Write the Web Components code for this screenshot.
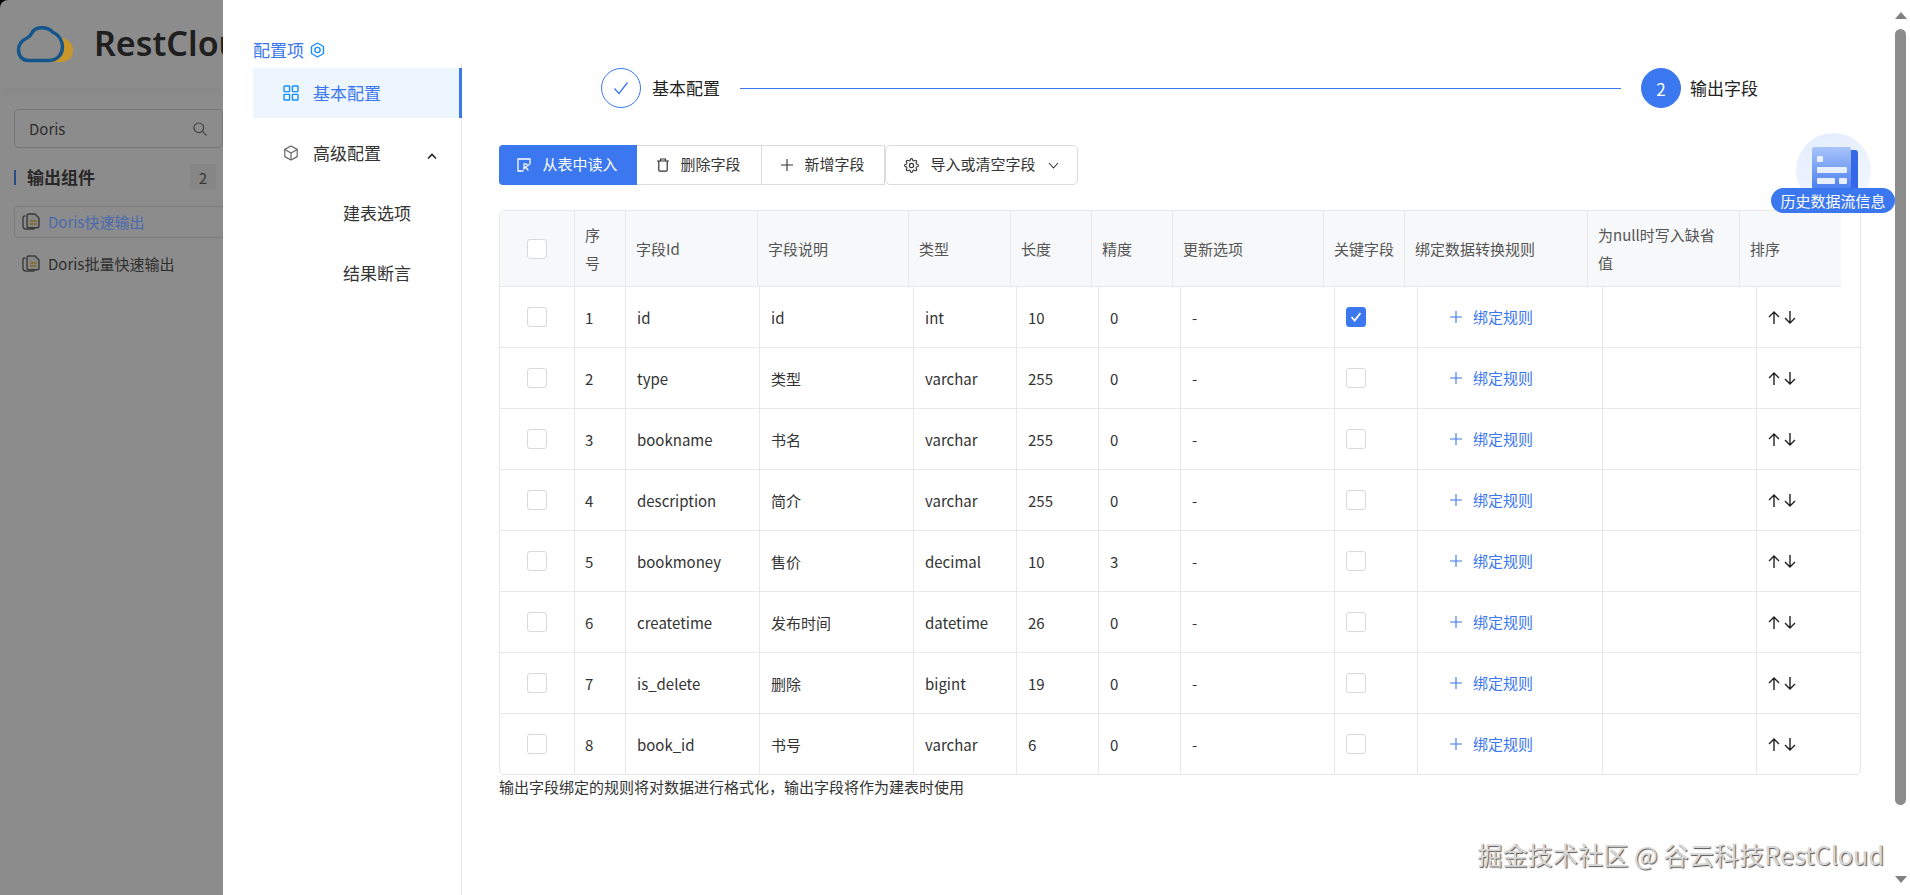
<!DOCTYPE html>
<html lang="zh">
<head>
<meta charset="utf-8">
<title>RestCloud</title>
<style>
  html, body { margin: 0; height: 100%; overflow: hidden; background: #fff; }
  body { font-family: "Noto Sans CJK SC", "Noto Sans", sans-serif; color: #333; }
  rest-page { height: 895px; }
</style>
</head>
<body>
<rest-page></rest-page>

<script>
const BLUE = '#3b77ee';

const icons = {
  grid: `<svg width="16" height="16" viewBox="0 0 16 16" fill="none" stroke="#1890ff" stroke-width="1.4"><rect x="1" y="1" width="5.6" height="5.6" rx=".6"/><rect x="9.4" y="1" width="5.6" height="5.6" rx=".6"/><rect x="1" y="9.4" width="5.6" height="5.6" rx=".6"/><rect x="9.4" y="9.4" width="5.6" height="5.6" rx=".6"/></svg>`,
  cube: `<svg width="16" height="16" viewBox="0 0 16 16" fill="none" stroke="#666" stroke-width="1.2" stroke-linejoin="round"><path d="M8 1l6.2 3.4v7.2L8 15l-6.2-3.4V4.4z"/><path d="M1.8 4.4L8 8l6.2-3.6M8 8v7"/></svg>`,
  hex: `<svg width="15" height="16" viewBox="0 0 15 16" fill="none" stroke="#1890ff" stroke-width="1.4" stroke-linejoin="round"><path d="M7.5 1l6 3.5v7l-6 3.5-6-3.5v-7z"/><circle cx="7.5" cy="8" r="2.6"/></svg>`,
  chevronUp: `<svg width="10" height="7" viewBox="0 0 10 7" fill="none" stroke="#222" stroke-width="1.6"><path d="M1 5.5l4-4 4 4"/></svg>`,
  chevronDown: `<svg width="11" height="7" viewBox="0 0 11 7" fill="none" stroke="#333" stroke-width="1.1"><path d="M1 1l4.5 5L10 1"/></svg>`,
  check: `<svg width="16" height="14" viewBox="0 0 16 14" fill="none" stroke="${BLUE}" stroke-width="1.3"><path d="M1.5 7.5l4.5 5 8.5-11"/></svg>`,
  importIn: `<svg width="14" height="14" viewBox="0 0 14 14" fill="none" stroke="#fff" stroke-width="1.3"><path d="M13 6.5V1H1v12h5.5"/><path d="M7 5.5v5.2l1.6-1.5 2.8 3.3M7 5.5l4.6 1.4-3 2.3"/></svg>`,
  trash: `<svg width="12" height="14" viewBox="0 0 12 14" fill="none" stroke="#333" stroke-width="1.2"><path d="M0 3h12M3.500 3V1h5v2M1.800 3v9a1.200 1.200 0 0 0 1.200 1.200h6a1.200 1.200 0 0 0 1.200-1.200V3"/></svg>`,
  plus: c => `<svg width="12" height="12" viewBox="0 0 12 12" fill="none" stroke="${c}" stroke-width="1.1"><path d="M6 0v12M0 6h12"/></svg>`,
  gear: `<svg width="15" height="15" viewBox="0 0 24 24" fill="none" stroke="#333" stroke-width="1.8"><circle cx="12" cy="12" r="3.4"/><path d="M19.4 15a1.65 1.65 0 0 0 .33 1.82l.06.06a2 2 0 0 1 0 2.83 2 2 0 0 1-2.83 0l-.06-.06a1.65 1.65 0 0 0-1.82-.33 1.65 1.65 0 0 0-1 1.51V21a2 2 0 0 1-2 2 2 2 0 0 1-2-2v-.09A1.65 1.65 0 0 0 9 19.4a1.65 1.65 0 0 0-1.82.33l-.06.06a2 2 0 0 1-2.83 0 2 2 0 0 1 0-2.83l.06-.06a1.65 1.65 0 0 0 .33-1.82 1.65 1.65 0 0 0-1.51-1H3a2 2 0 0 1-2-2 2 2 0 0 1 2-2h.09A1.65 1.65 0 0 0 4.6 9a1.65 1.65 0 0 0-.33-1.82l-.06-.06a2 2 0 0 1 0-2.83 2 2 0 0 1 2.83 0l.06.06a1.65 1.65 0 0 0 1.82.33H9a1.65 1.65 0 0 0 1-1.51V3a2 2 0 0 1 2-2 2 2 0 0 1 2 2v.09a1.65 1.65 0 0 0 1 1.51 1.65 1.65 0 0 0 1.82-.33l.06-.06a2 2 0 0 1 2.83 0 2 2 0 0 1 0 2.83l-.06.06a1.65 1.65 0 0 0-.33 1.82V9a1.65 1.65 0 0 0 1.51 1H21a2 2 0 0 1 2 2 2 2 0 0 1-2 2h-.09a1.65 1.65 0 0 0-1.51 1z"/></svg>`,
  arrows: `<svg width="28" height="13" viewBox="0 0 28 13" fill="none" stroke="#222" stroke-width="1.4"><path d="M6 13V1M1 6l5-5 5 5M22 0v12M17 7l5 5 5-5"/></svg>`,
  search: `<svg width="14" height="14" viewBox="0 0 14 14" fill="none" stroke="#777" stroke-width="1.2"><circle cx="5.8" cy="5.8" r="4.8"/><path d="M9.3 9.3l4.2 4.2"/></svg>`,
  doc: `<svg width="18" height="17" viewBox="0 0 18 17" fill="none" stroke="#6b6b6b" stroke-width="1.4" stroke-linejoin="round"><path d="M3.500 3H2.500A1.500 1.500 0 0 0 1 4.500v9A2.500 2.500 0 0 0 3.500 16h8A2 2 0 0 0 13 14.500"/><path d="M5 2.500A1.500 1.500 0 0 1 6.500 1H13l4 4v8a1.800 1.800 0 0 1-1.800 1.800H6.500A1.500 1.500 0 0 1 5 13.300z" fill="#f4f4f4"/><path d="M8 8h6.500M8 11h6.500" stroke="#f0c040" stroke-width="1.600"/></svg>`,
  logo: `<svg width="60" height="42" viewBox="0 0 60 42" fill="none"><path d="M48 15c7.500 1.500 11 7 11 12.500C59 35 53 39 46 39H33c8-1.500 13-8 14.500-15 .4-2.500.7-6 .5-9z" fill="#c9962a"/><path d="M14 37.500h21c9 0 13.500-7 13.500-13.500 0-7-4.500-13-10-15C34 3.500 21 2.500 17.500 10.500c-1 2.500-2.500 3.500-4.500 4.500C7.500 17.500 4.500 22 4.500 27c0 6 4 10.500 9.500 10.500z" stroke="#14558c" stroke-width="3.400"/></svg>`,
  sheet: `<svg width="46" height="42" viewBox="0 0 46 42" fill="none"><defs><linearGradient id="sheetFill" x1="0" y1="0" x2="0" y2="1"><stop offset="0" stop-color="#a8c4fa"/><stop offset="1" stop-color="#4c80f0"/></linearGradient></defs><path d="M38 3h5a3 3 0 0 1 3 3v36h-8z" fill="#3568e8"/><rect width="39" height="42" rx="2" fill="url(#sheetFill)"/><rect x="5" y="9" width="6" height="6" rx="1" fill="#e8f0ff"/><rect x="5" y="20" width="30" height="6" rx="1" fill="#e8f0ff"/><rect x="5" y="31" width="18" height="6" rx="1" fill="#e8f0ff"/><rect x="27" y="31" width="8" height="6" rx="1" fill="#e8f0ff"/></svg>`
};

class RestPage extends HTMLElement {
  connectedCallback() {
    this.attachShadow({ mode: 'open' });
    this.shadowRoot.innerHTML = `
      <style>
        :host { display: flex; width: 100%; overflow: hidden; }
        rest-backdrop { flex: 0 0 223px; }
        config-drawer { flex: 1; min-width: 0; }
      </style>
      <rest-backdrop></rest-backdrop>
      <config-drawer></config-drawer>
    `;
  }
}

// the dimmed component panel behind the drawer
class RestBackdrop extends HTMLElement {
  connectedCallback() {
    this.attachShadow({ mode: 'open' });
    this.shadowRoot.innerHTML = `
      <style>
        :host { display: block; position: relative; overflow: hidden; background: #000; height: 100%; }
        .panel { height: 100%; background: #fff; border-top-left-radius: 8px; }
        .mask { position: absolute; inset: 0; background: rgba(0, 0, 0, .45); }
        .head { height: 88px; box-sizing: border-box; padding: 23px 0 0 14px; display: flex; align-items: flex-start; white-space: nowrap; box-shadow: 0 2px 10px rgba(0, 0, 0, .05); }
        .head svg { flex: none; position: relative; z-index: 2; }
        .brand { margin: -5px 0 0 20px; font: 600 34px/50px "Noto Sans", sans-serif; color: #3a3a3a; }
        .search { margin: 21px 0 0 14px; width: 209px; height: 39px; box-sizing: border-box; border: 1px solid #d5d5d5; border-radius: 5px; padding: 0 15px 0 14px; display: flex; align-items: center; justify-content: space-between; font-size: 15px; color: #555; }
        .cat { margin: 16px 7px 0 14px; height: 26px; display: flex; align-items: center; font-size: 17px; font-weight: 700; color: #4a4a4a; }
        .cat b { font-weight: 700; padding-bottom: 2px; }
        .cat i { width: 2px; height: 15px; background: #4a8af0; margin-right: 11px; }
        .cat span { margin-left: auto; width: 26px; height: 26px; background: #f5f5f5; color: #666; display: grid; place-items: center; font-size: 15px; font-weight: 400; }
        .item { margin-left: 14px; height: 32px; box-sizing: border-box; width: 240px; padding: 0 0 2px 7px; display: flex; align-items: center; gap: 8px; font-size: 15px; white-space: nowrap; border: 1px solid transparent; border-radius: 4px; color: #555; }
        .item svg { flex: none; }
        .item.on { margin-top: 16px; border-color: #e2e2e2; margin-bottom: 10px; }
        .item.on span { position: relative; z-index: 2; color: #4a6aae; }
      </style>
      <div class="panel">
        <div class="head">${icons.logo}<div class="brand">RestCloud</div></div>
        <div class="search"><span>Doris</span>${icons.search}</div>
        <div class="cat"><i></i><b>输出组件</b><span>2</span></div>
        <div class="item on">${icons.doc}<span>Doris快速输出</span></div>
        <div class="item">${icons.doc}Doris批量快速输出</div>
      </div>
      <div class="mask"></div>
    `;
  }
}

class ConfigDrawer extends HTMLElement {
  connectedCallback() {
    this.attachShadow({ mode: 'open' });
    this.shadowRoot.innerHTML = `
      <style>
        :host { display: flex; position: relative; height: 100%; background: #fff; overflow: hidden; }
        config-menu { flex: 0 0 239px; }
        main { flex: 1; min-width: 0; box-sizing: border-box; padding: 68px 32px 0 37px; }
        step-bar { margin: 0 103px 37px 102px; }
        tool-bar { margin-bottom: 25px; }
        .note { margin-top: 1px; font-size: 15px; line-height: 21px; color: #333; }
        scroll-rail { flex: 0 0 17px; }
        history-badge { position: absolute; left: 1548px; top: 133px; }
        .mark { position: absolute; right: 26px; top: 836px; font-size: 25.2px; line-height: 36px; color: #d8d8d8; text-shadow: 1px 1px 1px #555; white-space: nowrap; }
      </style>
      <config-menu></config-menu>
      <main>
        <step-bar></step-bar>
        <tool-bar></tool-bar>
        <field-table></field-table>
        <div class="note">输出字段绑定的规则将对数据进行格式化，输出字段将作为建表时使用</div>
      </main>
      <scroll-rail></scroll-rail>
      <history-badge></history-badge>
      <div class="mark">掘金技术社区 @ 谷云科技RestCloud</div>
    `;
  }
}

class ConfigMenu extends HTMLElement {
  connectedCallback() {
    this.attachShadow({ mode: 'open' });
    this.shadowRoot.innerHTML = `
      <style>
        :host { display: flex; flex-direction: column; height: 100%; box-sizing: border-box; padding-left: 30px; }
        .title { height: 63px; box-sizing: border-box; padding-top: 37px; display: flex; align-items: center; gap: 6px; font-size: 17px; line-height: 24px; color: ${BLUE}; }
        ul { flex: 1; list-style: none; margin: 0; padding: 5px 0 0; border-right: 1px solid #e8e8e8; }
        li { position: relative; height: 50px; box-sizing: border-box; margin-bottom: 10px; padding: 0 0 2px 30px; display: flex; align-items: center; font-size: 17px; color: #333; }
        li > svg { margin: 2px 14px 0 0; }
        li.on { background: #edf5ff; color: ${BLUE}; margin-right: -1px; border-right: 3px solid ${BLUE}; }
        li.sub { padding-left: 90px; }
        li .fold { margin-left: auto; margin-right: 24px; }
      </style>
      <div class="title">配置项${icons.hex}</div>
      <ul>
        <li class="on">${icons.grid}基本配置</li>
        <li>${icons.cube}高级配置<span class="fold">${icons.chevronUp}</span></li>
        <li class="sub">建表选项</li>
        <li class="sub">结果断言</li>
      </ul>
    `;
  }
}

class StepBar extends HTMLElement {
  connectedCallback() {
    this.attachShadow({ mode: 'open' });
    this.shadowRoot.innerHTML = `
      <style>
        :host { display: flex; align-items: center; height: 40px; font-size: 17px; color: #222; }
        .dot { width: 40px; height: 40px; box-sizing: border-box; border-radius: 50%; border: 1px solid ${BLUE}; display: grid; place-items: center; }
        .dot.now { background: ${BLUE}; color: #fff; font-size: 17px; }
        .label { margin-left: 11px; padding-bottom: 2px; }
        .label.next { margin-left: 9px; }
        .line { flex: 1; height: 1px; background: ${BLUE}; margin: 0 20px; }
      </style>
      <span class="dot">${icons.check}</span><span class="label">基本配置</span>
      <span class="line"></span>
      <span class="dot now">2</span><span class="label next">输出字段</span>
    `;
  }
}

class ToolBtn extends HTMLElement {
  connectedCallback() {
    this.attachShadow({ mode: 'open' });
    this.shadowRoot.innerHTML = `
      <style>
        :host { display: flex; align-items: center; justify-content: center; gap: 11px; box-sizing: border-box; height: 40px; border: 1px solid #dcdcdc; border-left: 0; font-size: 15px; line-height: 20px; color: #333; white-space: nowrap; background: #fff; }
        :host([primary]) { background: ${BLUE}; border-color: ${BLUE}; color: #fff; border-radius: 4px 0 0 4px; }
        :host([round]) { border-left: 1px solid #dcdcdc; border-radius: 5px; }
      </style>
      <slot></slot>
    `;
  }
}

class ToolBar extends HTMLElement {
  connectedCallback() {
    this.attachShadow({ mode: 'open' });
    this.shadowRoot.innerHTML = `
      <style>
        :host { display: grid; grid-template-columns: 138px 125px 123px 193px; justify-content: start; }
        span { padding-bottom: 3px; }
        .tail { margin-left: 1px; padding: 0; display: flex; }
      </style>
      <tool-btn primary>${icons.importIn}<span>从表中读入</span></tool-btn>
      <tool-btn>${icons.trash}<span>删除字段</span></tool-btn>
      <tool-btn>${icons.plus('#333')}<span>新增字段</span></tool-btn>
      <tool-btn round>${icons.gear}<span>导入或清空字段</span><span class="tail">${icons.chevronDown}</span></tool-btn>
    `;
  }
}

const headCols = '75px 51px 132px 151px 102px 81px 81px 151px 81px 183px 152px 101px';
const bodyCols = '75px 51px 134px 154px 103px 82px 82px 154px 83px 185px 154px 1fr';
const headers = ['序<br>号', '字段Id', '字段说明', '类型', '长度', '精度', '更新选项', '关键字段', '绑定数据转换规则', '为null时写入缺省<br>值', '排序'];
const fields = [
  ['id', 'id', 'int', 10, 0, true],
  ['type', '类型', 'varchar', 255, 0],
  ['bookname', '书名', 'varchar', 255, 0],
  ['description', '简介', 'varchar', 255, 0],
  ['bookmoney', '售价', 'decimal', 10, 3],
  ['createtime', '发布时间', 'datetime', 26, 0],
  ['is_delete', '删除', 'bigint', 19, 0],
  ['book_id', '书号', 'varchar', 6, 0]
];

class FieldTable extends HTMLElement {
  connectedCallback() {
    this.attachShadow({ mode: 'open' });
    const head = headers.map(h => `<div class="c">${h}</div>`).join('');
    const rows = fields.map((f, i) => `
      <div class="row">
        <div class="c box"><i class="cb"></i></div>
        <div class="c seq">${i + 1}</div>
        <div class="c">${f[0]}</div>
        <div class="c">${f[1]}</div>
        <div class="c">${f[2]}</div>
        <div class="c">${f[3]}</div>
        <div class="c">${f[4]}</div>
        <div class="c">-</div>
        <div class="c">${f[5]
          ? `<i class="cb on"><svg width="12" height="10" viewBox="0 0 12 10" fill="none" stroke="#fff" stroke-width="1.8"><path d="M1.500 5l3.200 3.500L10.500 1"/></svg></i>`
          : `<i class="cb"></i>`}</div>
        <div class="c rule">${icons.plus(BLUE)}<span>绑定规则</span></div>
        <div class="c"></div>
        <div class="c">${icons.arrows}</div>
      </div>`).join('');
    this.shadowRoot.innerHTML = `
      <style>
        :host { display: block; box-sizing: border-box; border: 1px solid #e8e8e8; border-radius: 5px; overflow: hidden; font-size: 15px; color: #333; }
        .head { display: grid; grid-template-columns: ${headCols}; justify-content: start; height: 76px; box-sizing: border-box; }
        .head .c { background: #f7f8fa; color: #555; line-height: 28px; padding-left: 10px; box-sizing: border-box; border-bottom: 1px solid #e8e8e8; }
        .head .c:last-child { border-right: 0; }
        .row { display: grid; grid-template-columns: ${bodyCols}; height: 61px; box-sizing: border-box; border-bottom: 1px solid #e8e8e8; }
        .row:first-of-type { height: 60px; }
        .row:last-child { border-bottom: 0; height: 60px; }
        .c { display: flex; align-items: center; box-sizing: border-box; border-right: 1px solid #e8e8e8; padding-left: 11px; white-space: nowrap; }
        .c:last-child { border-right: 0; }
        .head .c.box, .c.box { padding-left: 27px; }
        .c.seq { padding-left: 10px; }
        .c.rule { padding-left: 32px; gap: 11px; color: ${BLUE}; }
        .c.rule span { padding-bottom: 2px; }
        .cb { display: grid; place-items: center; width: 20px; height: 20px; box-sizing: border-box; border: 1px solid #d9d9d9; border-radius: 3px; background: #fff; }
        .cb.on { background: ${BLUE}; border-color: ${BLUE}; }
      </style>
      <div class="head"><div class="c box"><i class="cb"></i></div>${head}</div>
      ${rows}
    `;
  }
}

class ScrollRail extends HTMLElement {
  connectedCallback() {
    this.attachShadow({ mode: 'open' });
    this.shadowRoot.innerHTML = `
      <style>
        :host { display: flex; flex-direction: column; align-items: center; box-sizing: border-box; padding: 12px 2px 12px 0; height: 100%; }
        .up, .down { width: 0; height: 0; border: solid transparent; border-width: 0 6.5px; }
        .up { border-bottom: 7px solid #808080; }
        .down { border-top: 7px solid #808080; margin-top: auto; }
        .thumb { width: 11px; height: 776px; margin-top: 10px; background: #8c8c8c; border-radius: 5.5px; }
      </style>
      <div class="up"></div>
      <div class="thumb"></div>
      <div class="down"></div>
    `;
  }
}

class HistoryBadge extends HTMLElement {
  connectedCallback() {
    this.attachShadow({ mode: 'open' });
    this.shadowRoot.innerHTML = `
      <style>
        :host { display: flex; flex-direction: column; align-items: center; width: 124px; }
        .disc { width: 75px; height: 75px; box-sizing: border-box; padding: 14px 0 0 16px; border-radius: 50%; background: linear-gradient(160deg, #e3edfd, #f4f8ff); }
        .disc svg { display: block; }
        .pill { position: relative; margin-top: -20px; width: 100%; height: 25px; border-radius: 13px; background: ${BLUE}; color: #fff; font-size: 15px; line-height: 25px; text-align: center; white-space: nowrap; }
      </style>
      <div class="disc">${icons.sheet}</div>
      <div class="pill">历史数据流信息</div>
    `;
  }
}

customElements.define('rest-page', RestPage);
customElements.define('rest-backdrop', RestBackdrop);
customElements.define('config-drawer', ConfigDrawer);
customElements.define('config-menu', ConfigMenu);
customElements.define('step-bar', StepBar);
customElements.define('tool-btn', ToolBtn);
customElements.define('tool-bar', ToolBar);
customElements.define('field-table', FieldTable);
customElements.define('scroll-rail', ScrollRail);
customElements.define('history-badge', HistoryBadge);
</script>
</body>
</html>
